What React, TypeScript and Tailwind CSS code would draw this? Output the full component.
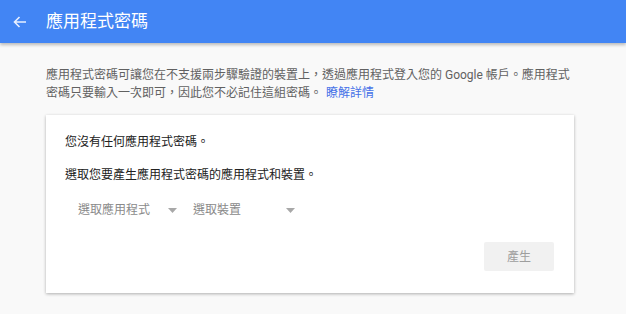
import React from 'react';

const font = { fontFamily: "Roboto, 'Noto Sans CJK TC', 'Noto Sans', sans-serif" };

function Dropdown({ label, width }: { label: string; width: string }) {
  return (
    <div className={`flex items-center h-[30px] pl-[13px] pr-[3px] ${width}`}>
      <span className="text-[12px] text-[#8a8a8a]">{label}</span>
      <svg className="ml-auto" width="9" height="5" viewBox="0 0 9 5">
        <path d="M0 0 L9 0 L4.5 5 Z" fill="#a8a8a8" />
      </svg>
    </div>
  );
}

export default function App() {
  return (
    <div className="w-[626px] h-[314px] bg-[#f9f9f9] overflow-hidden" style={font}>
      {/* Header */}
      <div className="h-[43px] bg-[#4285f4] flex items-center shadow-[0_2px_3px_rgba(0,0,0,0.25)] relative z-10">
        <svg className="ml-[13px]" width="14" height="12" viewBox="0 0 14 12">
          <path d="M13 6 H1.5 M6.5 1 L1.5 6 L6.5 11" stroke="#e8efff" strokeWidth="1.6" fill="none" />
        </svg>
        <h1 className="ml-[19px] text-[17px] text-white leading-none">應用程式密碼</h1>
      </div>

      <div className="px-[46px] pt-[23px]">
        <p className="text-[12px] leading-[18px] text-[#616161] w-[530px]">
          <span>應用程式密碼可讓您在不支援兩步驟驗證的裝置上，透過應用程式登入您的 Google 帳戶。應用程式</span>
          <span>密碼只要輸入一次即可，因此您不必記住這組密碼。</span>
          <a className="ml-[4px] text-[#4773e8]">瞭解詳情</a>
        </p>

        {/* Card */}
        <div className="mt-[13px] w-[528px] bg-white shadow-[0_1px_3px_rgba(0,0,0,0.3)] pt-[18px] pb-[22px] pl-[19px] pr-[20px]">
          <p className="text-[12px] leading-[18px] text-[#212121]">您沒有任何應用程式密碼。</p>
          <p className="mt-[15px] text-[12px] leading-[18px] text-[#212121]">選取您要產生應用程式密碼的應用程式和裝置。</p>
          <div className="mt-[11px] flex">
            <Dropdown label="選取應用程式" width="w-[115px]" />
            <Dropdown label="選取裝置" width="w-[118px]" />
          </div>
          <div className="mt-[17px] flex justify-end">
            <button className="w-[70px] h-[29px] rounded-[2px] bg-[#f1f1f1] text-[12px] text-[#9e9e9e]">產生</button>
          </div>
        </div>
      </div>
    </div>
  );
}
